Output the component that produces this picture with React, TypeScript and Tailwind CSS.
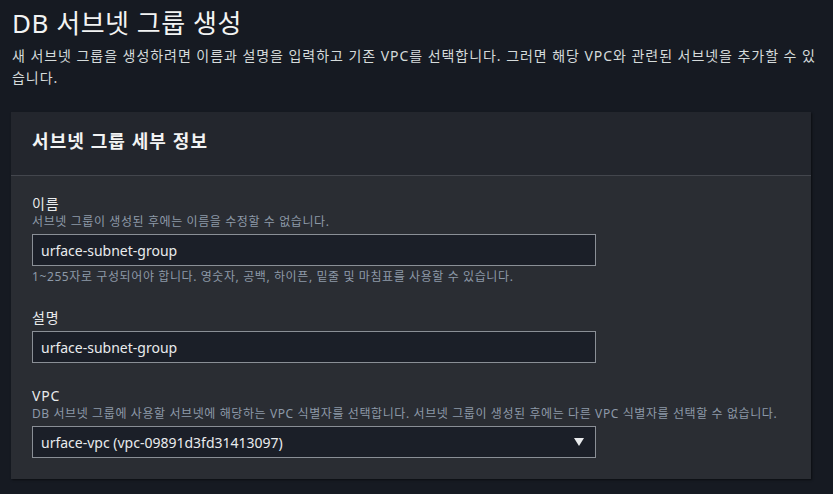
import React from 'react';

const font = { fontFamily: '"Noto Sans", "Noto Sans CJK KR", sans-serif' };

function Field({
  label,
  description,
  hint,
  children,
}: {
  label: string;
  description?: string;
  hint?: string;
  children: React.ReactNode;
}) {
  return (
    <div className="flex flex-col">
      <label className="text-[14px] leading-[18px] tracking-[0.06em] text-[#e9ebed]">{label}</label>
      {description && (
        <p className="text-[12px] leading-[16px] tracking-[0.05em] text-[#8d99a8] mt-[1px]">{description}</p>
      )}
      <div className="mt-[4px]">{children}</div>
      {hint && (
        <p className="text-[12px] leading-[16px] tracking-[0.05em] text-[#8d99a8] mt-[3px]">{hint}</p>
      )}
    </div>
  );
}

function TextBox({ value }: { value: string }) {
  return (
    <div className="w-[564px] h-[32px] border border-[#8a8f96] bg-[#1b1f28] flex items-center px-[8px] text-[14px] text-[#e9ebed]">
      {value}
    </div>
  );
}

export default function App() {
  return (
    <div className="min-h-[494px] w-full bg-[#161a22] text-[#e9ebed]" style={font}>
      <div className="px-[12px] pt-[4px]">
        <h1 className="text-[26px] leading-[38px] font-normal tracking-[0.02em] text-[#f2f3f3]">DB 서브넷 그룹 생성</h1>
        <p className="text-[14px] leading-[22px] tracking-[0.068em] break-all text-[#d5dbdb] pr-[2px] mt-[3px]">
          새 서브넷 그룹을 생성하려면 이름과 설명을 입력하고 기존 VPC를 선택합니다. 그러면 해당 VPC와 관련된 서브넷을 추가할 수 있습니다.
        </p>
      </div>

      <div className="ml-[11px] mr-[22px] mt-[23px] bg-[#2a2d33] shadow-[1px_1px_2px_rgba(0,0,0,0.5)]">
        <div className="bg-[#23262d] h-[64px] flex items-center px-[21px] border-b border-[#43464d]">
          <h2 className="text-[18px] font-bold tracking-[0.06em] text-[#f2f3f3] -mt-[5px]">서브넷 그룹 세부 정보</h2>
        </div>
        <div className="px-[21px] pt-[19px] pb-[21px] flex flex-col gap-[24px]">
          <Field
            label="이름"
            description="서브넷 그룹이 생성된 후에는 이름을 수정할 수 없습니다."
            hint="1~255자로 구성되어야 합니다. 영숫자, 공백, 하이픈, 밑줄 및 마침표를 사용할 수 있습니다."
          >
            <TextBox value="urface-subnet-group" />
          </Field>
          <Field label="설명">
            <TextBox value="urface-subnet-group" />
          </Field>
          <Field
            label="VPC"
            description="DB 서브넷 그룹에 사용할 서브넷에 해당하는 VPC 식별자를 선택합니다. 서브넷 그룹이 생성된 후에는 다른 VPC 식별자를 선택할 수 없습니다."
          >
            <div className="w-[564px] h-[32px] border border-[#8a8f96] bg-[#1b1f28] flex items-center justify-between pl-[8px] pr-[11px] text-[14px] text-[#e9ebed]">
              <span>urface-vpc (vpc-09891d3fd31413097)</span>
              <svg width="10" height="8" viewBox="0 0 10 8">
                <path d="M0 0 H10 L5 8 Z" fill="#e9ebed" />
              </svg>
            </div>
          </Field>
        </div>
      </div>
    </div>
  );
}
